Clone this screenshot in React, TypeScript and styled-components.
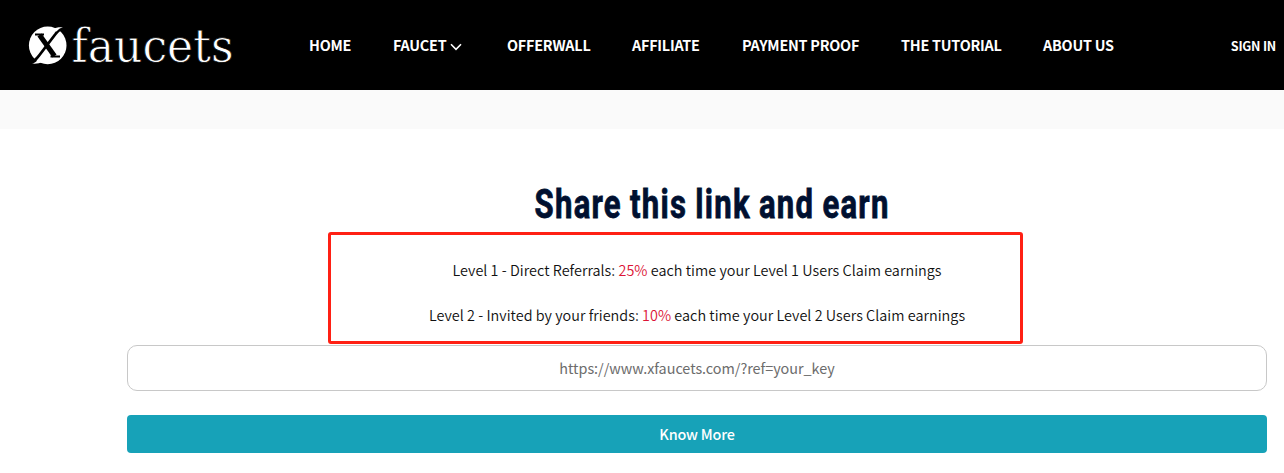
import React from 'react';
import styled, { createGlobalStyle } from 'styled-components';

interface NavItem {
  label: string;
  width: number;
  hasMenu?: boolean;
}

interface ReferralLevel {
  name: string;
  rate: string;
  detail: string;
}

const NAV_ITEMS: NavItem[] = [
  { label: 'HOME', width: 84 },
  { label: 'FAUCET', width: 114, hasMenu: true },
  { label: 'OFFERWALL', width: 125 },
  { label: 'AFFILIATE', width: 110 },
  { label: 'PAYMENT PROOF', width: 159 },
  { label: 'THE TUTORIAL', width: 142 },
  { label: 'ABOUT US', width: 113 },
];

const LEVELS: ReferralLevel[] = [
  {
    name: 'Level 1 - Direct Referrals:',
    rate: '25%',
    detail: 'each time your Level 1 Users Claim earnings',
  },
  {
    name: 'Level 2 - Invited by your friends:',
    rate: '10%',
    detail: 'each time your Level 2 Users Claim earnings',
  },
];

const Logo: React.FC = () => (
  <LogoImage viewBox="0 0 210 60" aria-label="xfaucets">
    <circle cx="19.7" cy="30.4" r="18.8" fill="#fff" />
    <path
      d="M36 13.4 C32 13.6 30 15.5 27.5 19 L11.5 40 C8.500 44 6 47.2 1 47.6"
      fill="none"
      stroke="#000"
      strokeWidth="2.8"
    />
    <path d="M35 12.2 C31 12 27 12.4 25 14 L28.500 16.600 C30.500 14.200 32 13 35 12.200Z" fill="#fff" />
    <path d="M4 48.600 C8.500 48.900 12 48.400 14.500 46.800 L10.500 44.200 C8.500 46.600 7 47.800 4 48.600Z" fill="#fff" />
    <path d="M11.5 20 L26.5 41" stroke="#000" strokeWidth="5" />
    <path d="M7 19.5 H16 M22.5 41.5 H32" stroke="#000" strokeWidth="2" />
    <LogoText x="43.5" y="47" textLength="162" lengthAdjust="spacingAndGlyphs">
      faucets
    </LogoText>
  </LogoImage>
);

const App: React.FC = () => {
  return (
    <>
      <GlobalStyle />
      <Header>
        <Logo />
        <Nav>
          {NAV_ITEMS.map(({ label, width, hasMenu }) => (
            <NavLink key={label} width={width}>
              {label}
              {hasMenu && (
                <Chevron viewBox="0 0 12 8">
                  <path d="M1 1.3 L6 6.3 L11 1.3" />
                </Chevron>
              )}
            </NavLink>
          ))}
        </Nav>
        <SignIn>SIGN IN</SignIn>
      </Header>
      <Strip />
      <Main>
        <Title>Share this link and earn</Title>
        <LevelBox>
          {LEVELS.map(({ name, rate, detail }) => (
            <Level key={name}>
              {name} <Rate>{rate}</Rate> {detail}
            </Level>
          ))}
        </LevelBox>
        <LinkInput readOnly value="https://www.xfaucets.com/?ref=your_key" />
        <KnowMoreButton>Know More</KnowMoreButton>
      </Main>
    </>
  );
};

export default App;

const GlobalStyle = createGlobalStyle`
  * {
    box-sizing: border-box;
  }
  body {
    margin: 0;
    background: #fff;
    font-family: 'Noto Sans CJK SC', 'Noto Sans', sans-serif;
    overflow: hidden;
  }
`;

const Header = styled.header`
  display: flex;
  align-items: center;
  height: 90px;
  padding: 0 8px 0 28px;
  background: #000;
  color: #fff;
`;

const LogoImage = styled.svg`
  flex: none;
  width: 210px;
  height: 60px;
  overflow: visible;
`;

const LogoText = styled.text`
  font-family: 'DejaVu Serif', serif;
  font-size: 47px;
  fill: #fff;
  stroke: #000;
  stroke-width: 0.75px;
`;

const Nav = styled.nav`
  display: flex;
  margin-left: 71px;
`;

const NavLink = styled.a<{ width: number }>`
  display: flex;
  align-items: center;
  width: ${({ width }) => width}px;
  font-size: 14.4px;
  font-weight: 700;
  line-height: 20px;
  letter-spacing: -0.24px;
  white-space: nowrap;
`;

const Chevron = styled.svg`
  width: 12px;
  height: 8px;
  margin: 3px 0 0 4px;
  fill: none;
  stroke: #fff;
  stroke-width: 1.6;
`;

const SignIn = styled.a`
  margin: 1px 0 0 auto;
  font-size: 12.6px;
  font-weight: 700;
  line-height: 18px;
  letter-spacing: -0.25px;
  white-space: nowrap;
`;

const Strip = styled.div`
  height: 39px;
  background: #fafafa;
`;

const Main = styled.main`
  display: flex;
  flex-direction: column;
  align-items: center;
  padding: 50px 17px 0 127px;
`;

const Title = styled.h1`
  height: 53px;
  margin: 0 0 0 30px;
  font-family: 'Roboto', sans-serif;
  font-size: 40.5px;
  font-weight: 700;
  line-height: 50px;
  letter-spacing: 1.6px;
  word-spacing: -1px;
  color: #001030;
  white-space: nowrap;
  -webkit-text-stroke: 0.8px #001030;
  transform: scaleX(0.768);
`;

const LevelBox = styled.section`
  width: 695px;
  height: 112px;
  margin-right: 43px;
  padding: 12px 0 0 43px;
  border: 3px solid #ff2014;
  border-radius: 3px;
`;

const Level = styled.p`
  margin: 0;
  line-height: 45px;
  font-size: 14.4px;
  font-weight: 350;
  letter-spacing: 0.03px;
  color: #111;
  text-align: center;
  white-space: nowrap;
`;

const Rate = styled.span`
  color: #dc1436;
`;

const LinkInput = styled.input`
  width: 100%;
  height: 46px;
  margin-top: 1px;
  padding: 0 2px 2px;
  border: 1px solid #c8c8c8;
  border-radius: 10px;
  font-family: inherit;
  font-size: 14.4px;
  letter-spacing: -0.03px;
  color: #6c6c6c;
  text-align: center;
`;

const KnowMoreButton = styled.button`
  width: 100%;
  height: 38px;
  margin-top: 24px;
  padding: 0 0 2px;
  border: 0;
  border-radius: 4px;
  background: #17a2b8;
  font-family: inherit;
  font-size: 14.4px;
  font-weight: 500;
  letter-spacing: -0.2px;
  color: #fff;
`;
